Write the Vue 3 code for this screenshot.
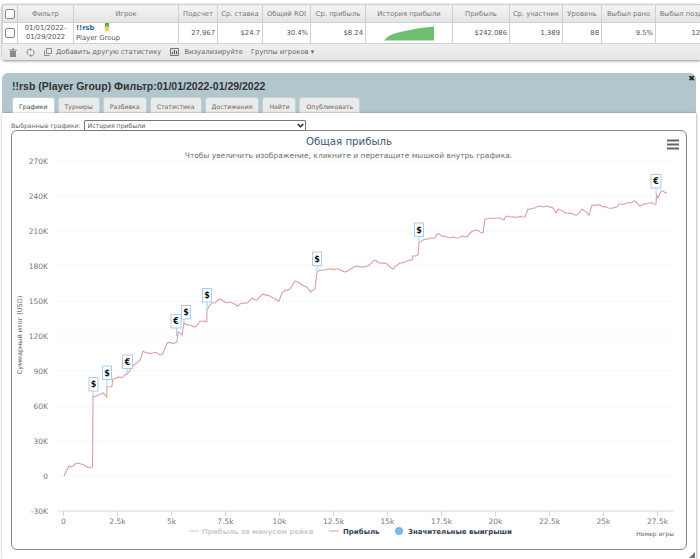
<template>
  <div class="page">
    <section class="grid-wrap">
      <div class="table-clip">
        <table class="stats">
          <colgroup>
            <col v-for="c in columns" :key="c.title" :style="{ width: c.width + 'px' }" />
          </colgroup>
          <thead>
            <tr>
              <th v-for="c in columns" :key="c.title">
                <input v-if="c.check" type="checkbox" class="check" />
                <template v-else>{{ c.title }}</template>
              </th>
            </tr>
          </thead>
          <tbody>
            <tr>
              <td class="center"><input type="checkbox" class="check" /></td>
              <td class="center dates">01/01/2022-<br />01/29/2022</td>
              <td class="player">
                <div class="player-top">
                  <a class="player-link">!!rsb</a>
                  <svg class="medal" width="10" height="10" viewBox="0 0 10 10">
                    <path d="M3 0h4v4H3z" fill="#6aa84f" />
                    <path d="M5 2l1 2.400 2.600.2-2 1.700.7 2.700L5 7.500 2.700 9l.7-2.700-2-1.700L4 4.400z" fill="#e8c860" />
                  </svg>
                </div>
                <div>Player Group</div>
              </td>
              <td class="num">27,967</td>
              <td class="num">$24.7</td>
              <td class="num">30.4%</td>
              <td class="num">$8.24</td>
              <td class="spark">
                <svg width="52" height="16" viewBox="0 0 52 16">
                  <path d="M1 15.500 5 11.500 10 9 17 7 27 5 37 3 51 1.500V15.500Z" fill="#6fbf73" />
                </svg>
              </td>
              <td class="num">$242,086</td>
              <td class="num">1,389</td>
              <td class="num">88</td>
              <td class="num">9.5%</td>
              <td class="num">12.4%</td>
            </tr>
          </tbody>
        </table>
      </div>
      <div class="toolbar">
        <svg class="tool first" width="8" height="9" viewBox="0 0 8 9">
          <path d="M0 1.500h8v1H0zM3 .5h2v1H3zM1 3h6v6H1z" fill="#8a8a8a" />
        </svg>
        <svg class="tool" width="9" height="9" viewBox="0 0 9 9">
          <path d="M4.500 1A3.500 3.500 0 0 0 2 7M4.500 8A3.500 3.500 0 0 0 7 2" fill="none" stroke="#8a8a8a" />
          <path d="M4 0v3l2-1.500zM5 6v3L3 7.500z" fill="#8a8a8a" />
        </svg>
        <svg class="tool copy" width="8" height="8" viewBox="0 0 8 8">
          <path d="M2.500.5h5v5h-5zM.5 2.500v5h5" fill="none" stroke="#8a8a8a" />
        </svg>
        <span class="tool-text">Добавить другую статистику</span>
        <svg class="tool gap" width="9" height="8" viewBox="0 0 9 8">
          <path d="M.5.5h8v7h-8z" fill="#ddd" stroke="#777" />
          <path d="M2 6V4h1v2zM4 6V2h1v4zM6 6V3h1v3z" fill="#555" />
        </svg>
        <span class="tool-text">Визуализируйте</span>
        <span class="tool-text groups">Группы игроков ▾</span>
      </div>
    </section>

    <section class="panel">
      <span class="close">✖</span>
      <header class="panel-head">
        <h1>!!rsb (Player Group) Фильтр:01/01/2022-01/29/2022</h1>
        <nav class="tabs">
          <a v-for="(t, i) in tabs" :key="t" class="tab" :class="{ active: i === 0 }">{{ t }}</a>
        </nav>
      </header>
      <div class="panel-body">
        <div class="picker">
          <label>Выбранные графики:</label>
          <div class="select-wrap">
            <select>
              <option>История прибыли</option>
            </select>
            <svg class="chevron" width="7" height="5" viewBox="0 0 7 5">
              <path d="M.7 1 3.500 3.800 6.300 1" fill="none" stroke="#222" stroke-width="1.500" />
            </svg>
          </div>
        </div>
        <div class="chart-box">
          <svg class="chart" width="676" height="420" viewBox="11 130 676 420">
            <g v-for="t in yTicks" :key="t.label">
              <line v-if="t.label !== '-30K'" x1="58" x2="673" :y1="t.y" :y2="t.y" class="gridline" />
              <text x="48" :y="t.y + 3" text-anchor="end" class="tick">{{ t.label }}</text>
            </g>
            <line x1="58" x2="673" y1="511" y2="511" class="axis" />
            <g v-for="t in xTicks" :key="t.label">
              <line :x1="t.x" :x2="t.x" y1="511" y2="516" class="axis" />
              <text :x="t.x" y="524" text-anchor="middle" class="tick">{{ t.label }}</text>
            </g>

            <text x="349" y="145" text-anchor="middle" class="title">Общая прибыль</text>
            <text x="348.5" y="158" text-anchor="middle" class="subtitle">Чтобы увеличить изображение, кликните и перетащите мышкой внутрь графика.</text>
            <text transform="translate(21.5 335) rotate(-90)" text-anchor="middle" class="axis-title side">Суммарный итог (USD)</text>
            <text x="674" y="536" text-anchor="end" class="axis-title">Номер игры</text>

            <polyline :points="linePoints" class="profit" />

            <g v-for="f in flags" :key="f.x">
              <line :x1="f.stem" :x2="f.stem" :y1="f.top + 14" :y2="f.end" class="flag-stem" />
              <rect :x="f.x + 0.5" :y="f.top + 0.5" :width="f.sign === '€' ? 10 : 9" height="13.500" class="flag" />
              <text :x="f.x + (f.sign === '€' ? 5.500 : 5)" :y="f.top + 10" text-anchor="middle" class="flag-sign">{{ f.sign }}</text>
            </g>

            <line x1="189" x2="199" y1="531" y2="531" class="legend-off-line" />
            <text x="202" y="534" class="legend off">Прибыль за минусом рейка</text>
            <line x1="329" x2="339" y1="531" y2="531" class="profit-key" />
            <text x="343" y="534" class="legend">Прибыль</text>
            <circle cx="399" cy="531" r="4" fill="#7cb5ec" />
            <text x="408" y="534" class="legend">Значительные выигрыши</text>

            <path d="M667 140.500h12M667 144.500h12M667 148.500h12" class="burger" />
          </svg>
        </div>
        <svg class="resize" width="6" height="6" viewBox="0 0 6 6">
          <path d="M6 0v6H0z" fill="#777" />
        </svg>
      </div>
    </section>
  </div>
</template>

<script setup>
const columns = [
  { title: '', width: 15, check: true },
  { title: 'Фильтр', width: 56 },
  { title: 'Игрок', width: 105 },
  { title: 'Подсчет', width: 39 },
  { title: 'Ср. ставка', width: 45 },
  { title: 'Общий ROI', width: 48 },
  { title: 'Ср. прибыль', width: 55 },
  { title: 'История прибыли', width: 87 },
  { title: 'Прибыль', width: 57 },
  { title: 'Ср. участник', width: 53 },
  { title: 'Уровень', width: 39 },
  { title: 'Выбыл рано', width: 54 },
  { title: 'Выбыл поздно', width: 60 },
]

const tabs = ['Графики', 'Турниры', 'Разбивка', 'Статистика', 'Достижения', 'Найти', 'Опубликовать']

const yTicks = ['270K', '240K', '210K', '180K', '150K', '120K', '90K', '60K', '30K', '0', '-30K'].map((label, i) => ({
  label,
  y: 161 + i * 35,
}))

const xTicks = ['0', '2.5k', '5k', '7.5k', '10k', '12.5k', '15k', '17.5k', '20k', '22.5k', '25k', '27.5k'].map((label, i) => ({
  label,
  x: 63.5 + i * 54,
}))

const flags = [
  { x: 88.5, top: 377, stem: 93, end: 397, sign: '$' },
  { x: 102, top: 365.5, stem: 107, end: 387, sign: '$' },
  { x: 122, top: 354.5, stem: 127, end: 374, sign: '€' },
  { x: 170.5, top: 314, stem: 176.5, end: 336, sign: '€' },
  { x: 181, top: 305, stem: 184, end: 323, sign: '$' },
  { x: 202, top: 288, stem: 207, end: 310, sign: '$' },
  { x: 312, top: 251.5, stem: 317, end: 272, sign: '$' },
  { x: 414, top: 222.5, stem: 419, end: 242, sign: '$' },
  { x: 650.5, top: 174, stem: 656, end: 195, sign: '€' },
]

// точки снял с картинки, в координатах страницы
const rawPoints = [
  [64, 476], [66, 472], [68, 468], [69, 466], [71, 467], [73, 466], [75, 464], [78, 463], [81, 464], [84, 465],
  [87, 467], [90, 468], [92.5, 467], [93, 397], [96, 396], [99, 395], [103, 393], [105, 395], [106.7, 397], [107, 387],
  [112, 386], [112.7, 379], [118, 377], [123, 377], [127, 374], [133, 366], [140, 360], [143, 351], [147, 353], [157, 353],
  [162, 355], [167, 343], [175, 343], [177, 342], [178, 332], [182, 335], [184, 323], [188, 325], [195, 327], [200, 321],
  [206.7, 322], [207, 310], [212, 303], [215, 303], [220, 299], [225, 302], [230, 302], [238, 306], [240, 304], [247, 303],
  [252, 298], [257, 300], [263, 294], [268, 295], [273, 298], [279, 301], [282, 293], [285, 290], [290, 289], [295, 281],
  [302, 285], [307, 287], [311, 292], [315, 289], [317, 272], [320, 270], [325, 270], [330, 269], [338, 269], [345, 272],
  [350, 269], [357, 266], [360, 267], [368, 266], [374, 260], [380, 263], [387, 264], [393, 269], [400, 263], [407, 261],
  [412, 260], [413, 256], [418, 255], [419, 242], [427, 239], [435, 238], [437, 234], [447, 237], [457, 238], [462, 236],
  [467, 237], [470, 233], [475, 230], [480, 232], [483, 233], [485, 219], [490, 218], [497, 218], [504, 220], [506, 216],
  [510, 217], [517, 217], [525, 217], [528, 209], [535, 208], [540, 206], [552, 207], [556, 213], [558, 209], [566, 213],
  [577, 215], [582, 209], [589, 215], [592, 205], [600, 205], [608, 208], [617, 207], [619, 204], [630, 203], [634, 201],
  [640, 206], [648, 203], [656, 204], [656.5, 195], [658, 198], [661, 191], [667, 193],
]

// на длинных отрезках добавляем мелкую дрожь, линия на графике неровная
function wiggle(points) {
  const out = []
  points.forEach((p, i) => {
    const next = points[i + 1]
    out.push(p)
    if (next && next[0] - p[0] >= 4) {
      const steps = Math.floor((next[0] - p[0]) / 2)
      for (let s = 1; s < steps; s++) {
        const t = s / steps
        const x = p[0] + (next[0] - p[0]) * t
        const y = p[1] + (next[1] - p[1]) * t + Math.sin(x * 2.3) * 0.7
        out.push([x.toFixed(1), y.toFixed(1)])
      }
    }
  })
  return out
}

const linePoints = wiggle(rawPoints).map((p) => p.join(',')).join(' ')
</script>

<style>
html,
body {
  overflow: hidden;
  background: #fff;
}
</style>

<style scoped>
.page {
  width: 700px;
  height: 559px;
  overflow: hidden;
  font-family: "DejaVu Sans", Verdana, sans-serif;
  font-size: 6.8px;
  color: #555;
  padding-top: 4px;
  box-sizing: border-box;
}

.grid-wrap {
  margin-left: 2px;
  width: 698px;
  border-radius: 3px 0 0 3px;
  box-shadow: 0 1px 3px rgba(0, 0, 0, 0.45);
}

.table-clip {
  overflow: hidden;
}

.stats {
  border-collapse: collapse;
  table-layout: fixed;
  width: 713px;
}

.stats th,
.stats td {
  border: 1px solid #d0d0d0;
  white-space: nowrap;
  overflow: hidden;
}

.stats th {
  height: 17px;
  padding: 0;
  font-weight: normal;
  color: #777;
  background: linear-gradient(#f4f4f4, #e4e4e4);
}

.stats td {
  height: 20px;
  padding: 0 2px;
  background: #fff;
}

.center {
  text-align: center;
}

.dates {
  line-height: 9px;
}

.num {
  text-align: right;
}

.player {
  line-height: 10px;
}

.player-top {
  display: flex;
  align-items: center;
  gap: 8px;
}

.player-link {
  color: #1f5f9e;
  font-weight: bold;
}

.spark {
  text-align: center;
  line-height: 0;
}

.check {
  appearance: none;
  display: block;
  width: 10px;
  height: 10px;
  margin: 0 auto;
  border: 1px solid #888;
  border-radius: 2px;
  background: #fff;
}

.toolbar {
  display: flex;
  align-items: center;
  height: 16px;
  background: linear-gradient(#f0f0f0, #e6e6e6);
  color: #666;
}

.tool {
  margin-right: 9px;
}

.tool.first {
  margin-left: 7px;
}

.tool.copy {
  margin-right: 4px;
}

.tool.gap {
  margin-left: 9px;
  margin-right: 5px;
}

.tool-text {
  white-space: nowrap;
}

.groups {
  margin-left: 8px;
}

.panel {
  position: relative;
  width: 694px;
  margin: 13px 0 0 2px;
}

.close {
  position: absolute;
  top: 1px;
  right: 1px;
  font-size: 8px;
  color: #222;
}

.panel-head {
  height: 40px;
  padding: 7px 0 0 10px;
  box-sizing: border-box;
  background: #b2c6cd;
  border-radius: 6px 6px 0 0;
}

.panel-head h1 {
  margin: 0 0 4px;
  font-family: "Liberation Sans", Arial, sans-serif;
  font-size: 10.500px;
  line-height: 13px;
  font-weight: bold;
  color: #333;
}

.tabs {
  display: flex;
  gap: 3px;
}

.tab {
  height: 16px;
  line-height: 17px;
  padding: 0 6px;
  font-size: 6.200px;
  background: #eaeaea;
  color: #666;
  border-radius: 3px 3px 0 0;
  border: 1px solid #c4d2d7;
  border-bottom: 0;
  box-sizing: border-box;
}

.tab.active {
  background: #fff;
  color: #444;
}

.panel-body {
  position: relative;
  height: 446px;
  background: #fff;
  padding: 7px 0 0 9px;
  box-sizing: border-box;
  box-shadow: 1px 0 2px rgba(0, 0, 0, 0.25), -1px 0 2px rgba(0, 0, 0, 0.12);
}

.picker {
  display: flex;
  align-items: center;
  height: 11px;
  gap: 3px;
  color: #666;
  font-size: 6.2px;
}

.select-wrap {
  position: relative;
  height: 11px;
}

.picker select {
  appearance: none;
  display: block;
  width: 222px;
  height: 11px;
  padding: 0 0 0 3px;
  border: 1px solid #777;
  border-radius: 1px;
  font-family: inherit;
  font-size: 6.2px;
  color: #555;
  background: #fff;
}

.chevron {
  position: absolute;
  top: 3px;
  right: 2px;
  pointer-events: none;
}

.chart-box {
  width: 676px;
  height: 420px;
  margin-top: -1px;
  border: 1px solid #888;
  border-radius: 6px;
  box-sizing: border-box;
  overflow: hidden;
}

.chart {
  display: block;
  margin: -1px 0 0 -1px;
}

.gridline {
  stroke: #e2e2e2;
  stroke-dasharray: 1 3;
}

.axis {
  stroke: #ccd6eb;
}

.tick {
  font-size: 7.5px;
  fill: #777;
}

.title {
  font-size: 10.200px;
  fill: #3e576f;
}

.subtitle {
  font-size: 7.5px;
  fill: #6d6d6d;
}

.axis-title {
  font-size: 6px;
  fill: #666;
}

.axis-title.side {
  font-size: 6.500px;
}

.profit {
  fill: none;
  stroke: #d9a0a0;
  stroke-width: 1.1;
}

.profit-key {
  stroke: #d9a0a0;
}

.legend-off-line {
  stroke: #ccc;
}

.flag {
  fill: #fff;
  stroke: #a9cdf2;
}

.flag-stem {
  stroke: #a9cdf2;
}

.flag-sign {
  font-size: 8px;
  font-weight: bold;
  fill: #111;
}

.legend {
  font-size: 7px;
  font-weight: bold;
  fill: #333f5a;
}

.legend.off {
  fill: #ccc;
}

.burger {
  stroke: #666;
  stroke-width: 2;
}

.resize {
  position: absolute;
  right: 1px;
  bottom: 1px;
}
</style>
